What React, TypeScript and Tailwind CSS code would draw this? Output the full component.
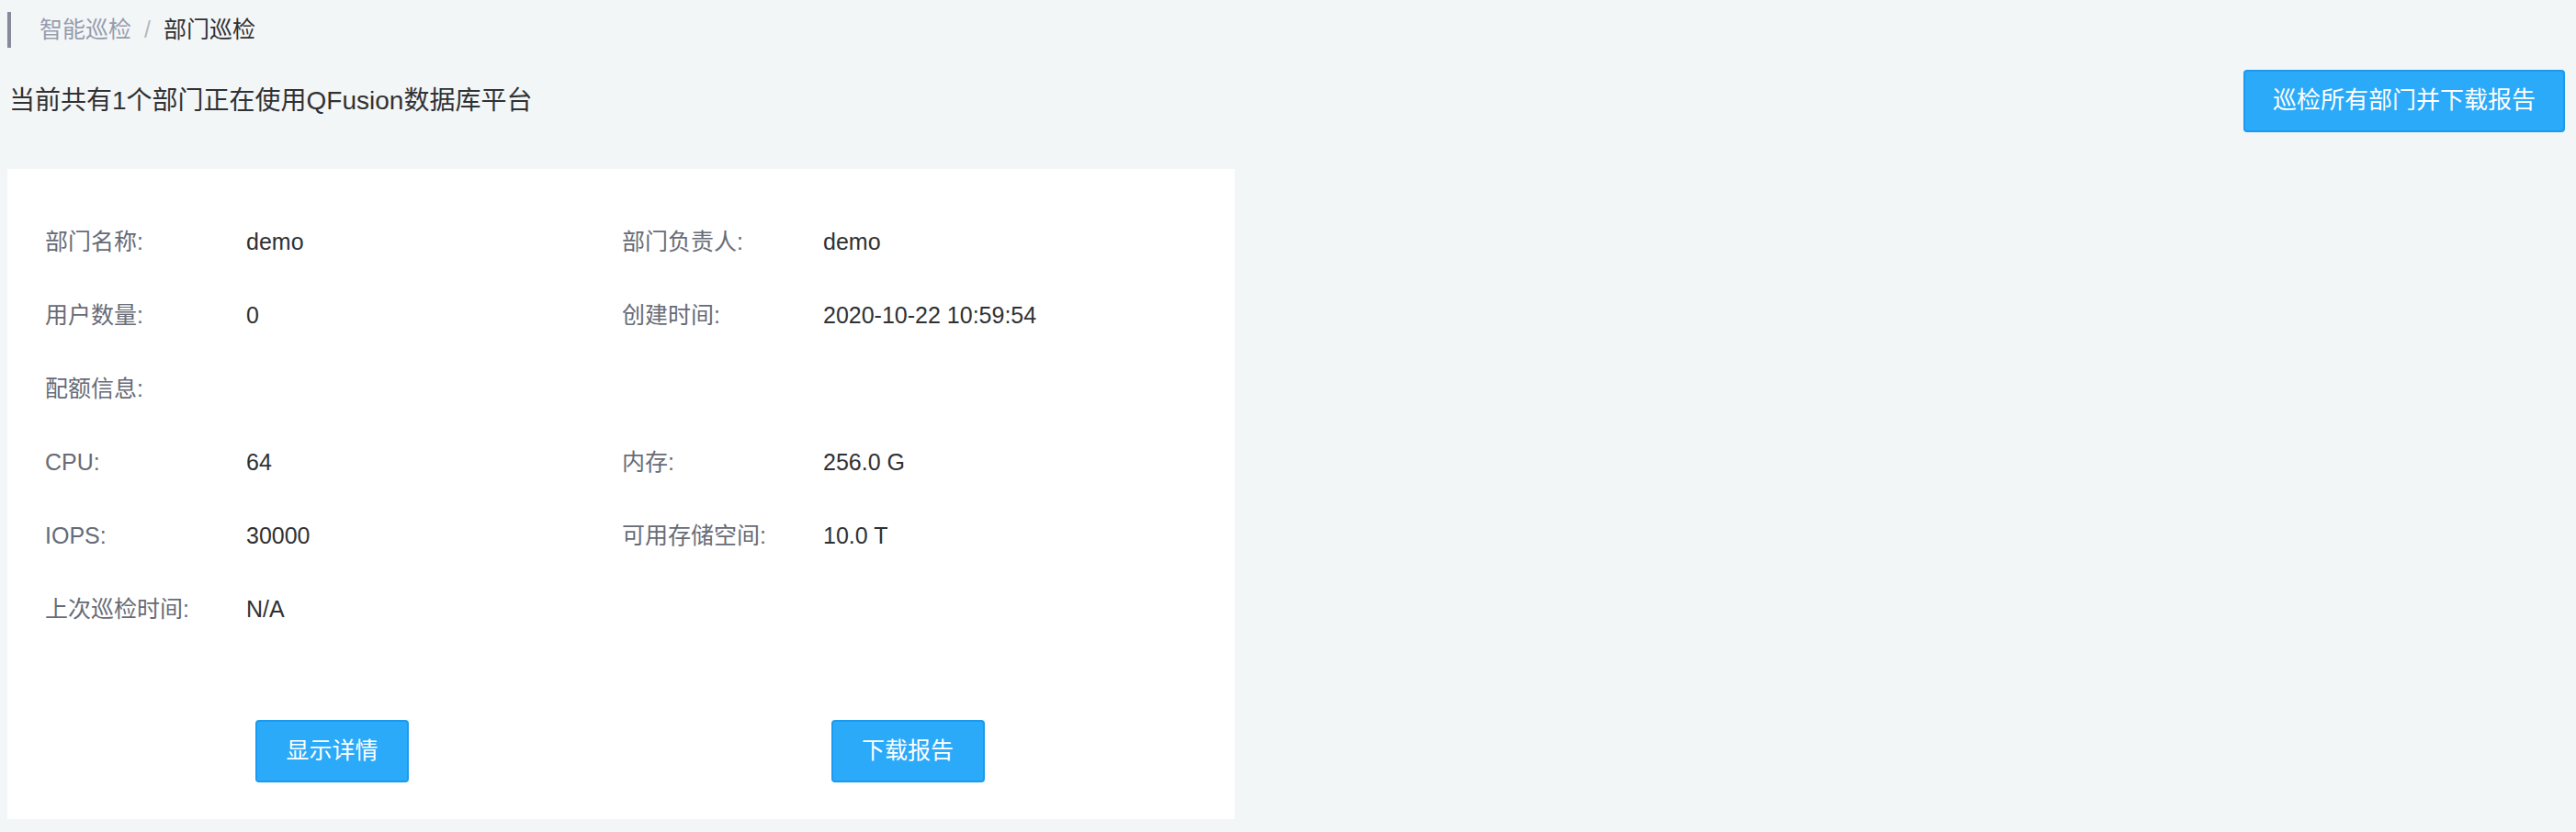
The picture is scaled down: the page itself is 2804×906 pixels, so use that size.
const font = { fontFamily: '"Liberation Sans", "Noto Sans CJK SC", sans-serif' };

const rows: [string, string, string, string][] = [
  ["部门名称:", "demo", "部门负责人:", "demo"],
  ["用户数量:", "0", "创建时间:", "2020-10-22 10:59:54"],
  ["配额信息:", "", "", ""],
  ["CPU:", "64", "内存:", "256.0 G"],
  ["IOPS:", "30000", "可用存储空间:", "10.0 T"],
  ["上次巡检时间:", "N/A", "", ""],
];

function Field({ label, value }: { label: string; value: string }) {
  return (
    <div className="flex items-center w-[628px] h-[80px]">
      <span className="w-[219px] text-[25px] text-[#676b76]">{label}</span>
      <span className="text-[25px] text-[#303133]">{value}</span>
    </div>
  );
}

function BlueButton({ children, className = "" }: { children: React.ReactNode; className?: string }) {
  return (
    <button
      className={`h-[68px] bg-[#2aaaf9] border-2 border-[#1a9bf0] rounded-[4px] text-white text-[25px] ${className}`}
    >
      {children}
    </button>
  );
}

export default function App() {
  return (
    <div className="w-full h-[906px] bg-[#f3f6f7]" style={font}>
      <div className="pt-[13px] pl-2">
        <div className="flex items-center h-[39px] border-l-[4px] border-[#858a9c] pl-[31px] text-[25px]">
          <span className="text-[#979cae]">智能巡检</span>
          <span className="text-[#b4b8c4] mx-[14px]">/</span>
          <span className="text-[#303133]">部门巡检</span>
        </div>
      </div>

      <div className="flex items-center justify-between mt-[24px] h-[67px] pl-[10px] pr-[12px]">
        <span className="text-[28px] text-[#303133]">当前共有1个部门正在使用QFusion数据库平台</span>
        <BlueButton className="w-[350px] h-[67px] text-[26px]">巡检所有部门并下载报告</BlueButton>
      </div>

      <div className="ml-2 mt-[41px] w-[1336px] h-[708px] bg-white pt-[40px] pl-[41px]">
        {rows.map((r, i) => (
          <div key={i} className="flex">
            <Field label={r[0]} value={r[1]} />
            <Field label={r[2]} value={r[3]} />
          </div>
        ))}
        <div className="flex mt-[80px]">
          <div className="w-[625px] flex justify-center">
            <BlueButton className="w-[167px]">显示详情</BlueButton>
          </div>
          <div className="w-[628px] flex justify-center">
            <BlueButton className="w-[167px]">下载报告</BlueButton>
          </div>
        </div>
      </div>
    </div>
  );
}
